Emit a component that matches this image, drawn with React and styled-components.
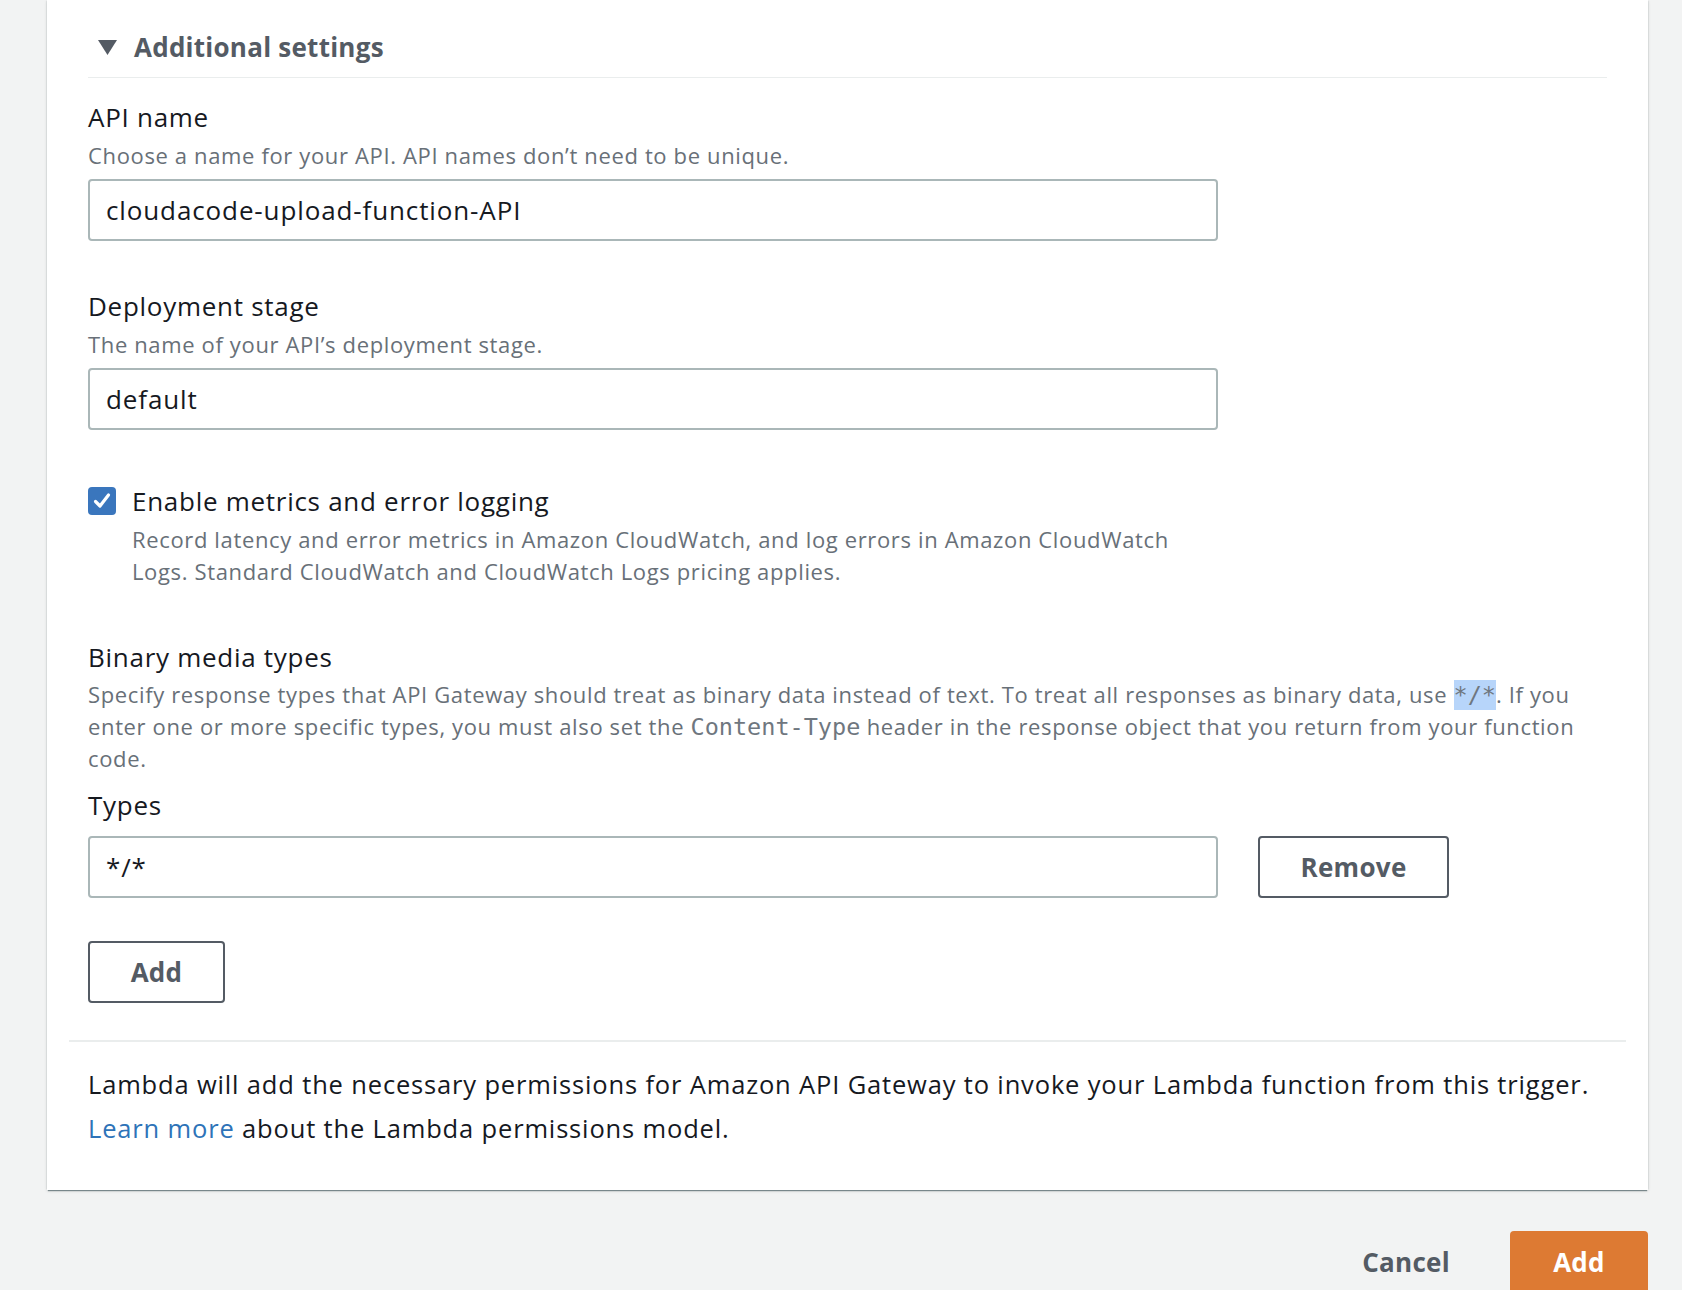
import React from "react";
import styled, { createGlobalStyle } from "styled-components";

const GlobalStyle = createGlobalStyle`
  html, body { margin: 0; padding: 0; background: #f2f3f3; }
  body { font-family: "Open Sans", "Noto Sans", sans-serif; color: #16191f; }
  * { box-sizing: border-box; }
`;

const Page = styled.div`
  padding: 0 34px 0 47px;
  background: #f2f3f3;
  min-height: 1290px;
`;

const Card = styled.section`
  background: #fff;
  padding: 0 22px 40px;
  box-shadow: 0 2px 1px -1px rgba(0, 28, 36, 0.45), 1px 0 1px -1px rgba(0, 28, 36, 0.3),
    -1px 0 1px -1px rgba(0, 28, 36, 0.3), 0 1px 3px rgba(0, 28, 36, 0.15);
`;

const Expandable = styled.div`
  padding: 0 19px;
`;

const Header = styled.div`
  display: flex;
  align-items: center;
  gap: 17px;
  padding: 27px 0 10px 10px;
  border-bottom: 1px solid #eaeded;
  font-weight: 700;
  font-size: 26px;
  letter-spacing: 0.25px;
  line-height: 40px;
  color: #545b64;
`;

const Caret = styled.svg`
  width: 19px;
  height: 15px;
  flex: none;
`;

const Field = styled.div`
  margin-top: ${(p) => p.$top}px;
  max-width: ${(p) => (p.$wide ? "none" : "1130px")};
`;

const Label = styled.div`
  margin-top: ${(p) => p.$top ?? 0}px;
  font-size: 26px;
  letter-spacing: 0.72px;
  line-height: 36px;
  color: #16191f;
`;

const Desc = styled.div`
  margin-top: ${(p) => p.$top ?? 4}px;
  font-size: 22px;
  letter-spacing: 0.64px;
  line-height: 32px;
  color: #687078;
`;

const Code = styled.code`
  font-family: "DejaVu Sans Mono", "Liberation Mono", monospace;
  font-size: 23.5px;
  line-height: 28px;
  letter-spacing: 0;
  color: #6f777f;
  padding: ${(p) => (p.$hl ? "1px 0" : "0")};
  background: ${(p) => (p.$hl ? "#b7d5fa" : "transparent")};
`;

const Input = styled.div`
  margin-top: ${(p) => p.$top ?? 8}px;
  height: 62px;
  border: 2px solid #aab7b8;
  border-radius: 4px;
  padding: 0 16px;
  display: flex;
  align-items: center;
  font-size: 26px;
  letter-spacing: 0.88px;
  color: #16191f;
  background: #fff;
`;

const CheckRow = styled.div`
  display: flex;
  gap: 16px;
  align-items: flex-start;
`;

const Box = styled.span`
  width: 28px;
  height: 28px;
  margin-top: 4px;
  flex: none;
  border-radius: 4px;
  background: #3a76bd;
  display: flex;
  align-items: center;
  justify-content: center;
`;

const TypeRow = styled.div`
  display: flex;
  gap: 40px;
  margin-top: 13px;
  align-items: stretch;
`;

const TypeInput = styled(Input)`
  width: 1130px;
  margin-top: 0;
`;

const Button = styled.button`
  display: block;
  height: 62px;
  width: ${(p) => p.$w}px;
  border: 2px solid #545b64;
  border-radius: 4px;
  background: #fff;
  color: #545b64;
  font-family: "Open Sans", sans-serif;
  font-weight: 700;
  font-size: 26px;
  letter-spacing: 0.3px;
  padding: 0;
  margin-top: ${(p) => p.$top ?? 0}px;
`;

const Divider = styled.hr`
  border: 0;
  border-top: 2px solid #eaeded;
  margin: 37px 0 0;
`;

const Body = styled.p`
  margin: 20px 0 0;
  padding: 0 19px;
  font-size: 25.5px;
  letter-spacing: 0.84px;
  line-height: 44px;
  color: #16191f;
`;

const Link = styled.a`
  color: #2e73b8;
  text-decoration: none;
`;

const Footer = styled.div`
  display: flex;
  justify-content: flex-end;
  align-items: center;
  gap: 30px;
  margin-top: 41px;
`;

const TextButton = styled.button`
  border: 0;
  background: transparent;
  color: #545b64;
  font-family: "Open Sans", sans-serif;
  font-weight: 700;
  font-size: 26px;
  letter-spacing: 0.3px;
  padding: 0 30px;
  height: 62px;
`;

const Primary = styled.button`
  border: 0;
  border-radius: 4px 4px 0 0;
  background: #dd7a33;
  color: #fff;
  font-family: "Open Sans", sans-serif;
  font-weight: 700;
  font-size: 26px;
  letter-spacing: 0.3px;
  width: 138px;
  height: 62px;
  padding: 0;
`;

export default function App() {
  return (
    <>
      <GlobalStyle />
      <Page>
        <Card>
          <Expandable>
            <Header>
              <Caret viewBox="0 0 19 15">
                <polygon points="0,0 19,0 9.5,15" fill="#545b64" />
              </Caret>
              Additional settings
            </Header>

            <Field $top={21}>
              <Label>API name</Label>
              <Desc>Choose a name for your API. API names don’t need to be unique.</Desc>
              <Input>cloudacode-upload-function-API</Input>
            </Field>

            <Field $top={47}>
              <Label>Deployment stage</Label>
              <Desc>The name of your API’s deployment stage.</Desc>
              <Input>default</Input>
            </Field>

            <Field $top={53}>
              <CheckRow>
                <Box>
                  <svg width="20" height="20" viewBox="0 0 20 20">
                    <path d="M3.5 10.5 L8 15 L16.5 4" fill="none" stroke="#fff" strokeWidth="3.2" strokeLinecap="round" strokeLinejoin="round" />
                  </svg>
                </Box>
                <div>
                  <Label>Enable metrics and error logging</Label>
                  <Desc>
                    Record latency and error metrics in Amazon CloudWatch, and log errors in Amazon CloudWatch
                    Logs. Standard CloudWatch and CloudWatch Logs pricing applies.
                  </Desc>
                </div>
              </CheckRow>
            </Field>

            <Field $top={52} $wide>
              <Label>Binary media types</Label>
              <Desc $top={3}>
                Specify response types that API Gateway should treat as binary data instead of text. To treat all
                responses as binary data, use <Code $hl>*/*</Code>. If you enter one or more specific types, you must
                also set the <Code>Content-Type</Code> header in the response object that you return from your
                function code.
              </Desc>
              <Label $top={13}>Types</Label>
              <TypeRow>
                <TypeInput>*/*</TypeInput>
                <Button $w={191}>Remove</Button>
              </TypeRow>
              <Button $w={137} $top={43}>Add</Button>
            </Field>
          </Expandable>

          <Divider />
          <Body>
            Lambda will add the necessary permissions for Amazon API Gateway to invoke your Lambda function from this
            trigger. <Link href="#">Learn more</Link> about the Lambda permissions model.
          </Body>
        </Card>
        <Footer>
          <TextButton>Cancel</TextButton>
          <Primary>Add</Primary>
        </Footer>
      </Page>
    </>
  );
}
